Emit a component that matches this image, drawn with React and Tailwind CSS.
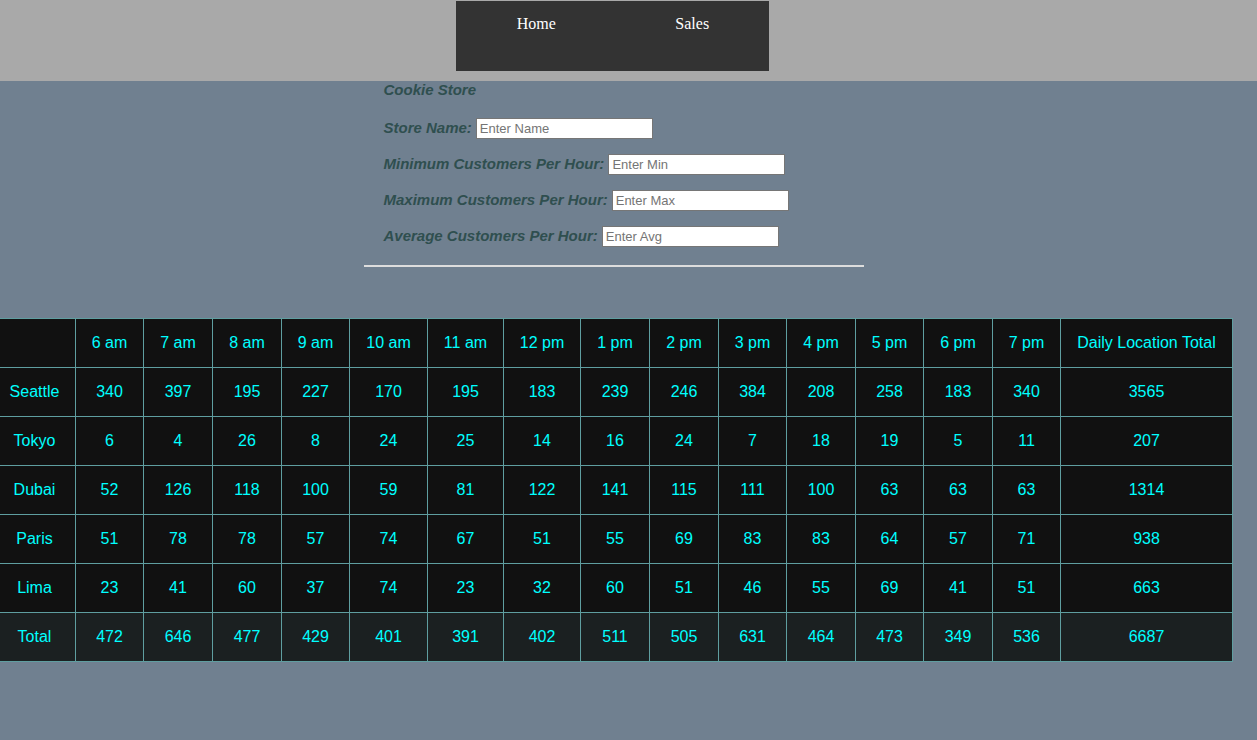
import React from 'react';

const hours = ['6 am', '7 am', '8 am', '9 am', '10 am', '11 am', '12 pm', '1 pm', '2 pm', '3 pm', '4 pm', '5 pm', '6 pm', '7 pm'];
const widths = [82, 68, 69, 69, 68, 78, 76, 77, 69, 69, 68, 69, 68, 69, 68, 172];

const stores = [
  ['Seattle', 340, 397, 195, 227, 170, 195, 183, 239, 246, 384, 208, 258, 183, 340, 3565],
  ['Tokyo', 6, 4, 26, 8, 24, 25, 14, 16, 24, 7, 18, 19, 5, 11, 207],
  ['Dubai', 52, 126, 118, 100, 59, 81, 122, 141, 115, 111, 100, 63, 63, 63, 1314],
  ['Paris', 51, 78, 78, 57, 74, 67, 51, 55, 69, 83, 83, 64, 57, 71, 938],
  ['Lima', 23, 41, 60, 37, 74, 23, 32, 60, 51, 46, 55, 69, 41, 51, 663],
];
const totals = ['Total', 472, 646, 477, 429, 401, 391, 402, 511, 505, 631, 464, 473, 349, 536, 6687];

const fields = [
  ['Store Name:', 'Enter Name'],
  ['Minimum Customers Per Hour:', 'Enter Min'],
  ['Maximum Customers Per Hour:', 'Enter Max'],
  ['Average Customers Per Hour:', 'Enter Avg'],
];

function Row({ cells, total }) {
  return (
    <tr className={total ? 'bg-[#1b2021]' : 'bg-[#111111]'}>
      {cells.map((c, i) => (
        <td key={i} className="h-[49px] border border-[#5f9ea0] text-center align-middle">
          {c}
        </td>
      ))}
    </tr>
  );
}

export default function App() {
  return (
    <div className="min-h-[740px] overflow-hidden bg-[#708090] font-['Liberation_Sans',Arial,sans-serif]">
      <header className="h-[81px] bg-[#a9a9a9] pt-px">
        <nav className="ml-[456px] grid h-[70px] w-[313px] grid-cols-2 bg-[#333333] pl-[2px] pt-[11px] font-['Liberation_Serif',serif] text-base text-white">
          <a className="h-fit pl-[1px] text-center">Home</a>
          <a className="h-fit pl-[2px] text-center">Sales</a>
        </nav>
      </header>

      <section className="mx-auto w-[500px] -translate-x-[15px] pl-5 text-[15px] font-bold italic text-[#2f4f4f]">
        <h2 className="pt-[1px] text-[15px] leading-4">Cookie Store</h2>
        <form className="mt-[20px] flex flex-col gap-4">
          {fields.map(([label, ph]) => (
            <label key={label} className="flex h-5 items-center">
              <span>{label}</span>
              <input
                placeholder={ph}
                className="ml-1 h-[21px] w-[177px] border border-[#767676] bg-white px-[3px] text-[13px] font-normal not-italic text-black placeholder:text-[#757575]"
              />
            </label>
          ))}
        </form>
        <hr className="mt-[19px] h-[2px] -ml-5 w-[500px] border-0 bg-[#dddddd]" />
      </section>

      <table className="-ml-[7px] mt-[51px] table-fixed border-collapse text-base text-[#00ffff]">
        <colgroup>
          {widths.map((w, i) => (
            <col key={i} style={{ width: w }} />
          ))}
        </colgroup>
        <tbody>
          <Row cells={['', ...hours, 'Daily Location Total']} />
          {stores.map((s) => (
            <Row key={s[0]} cells={s} />
          ))}
          <Row cells={totals} total />
        </tbody>
      </table>
    </div>
  );
}
